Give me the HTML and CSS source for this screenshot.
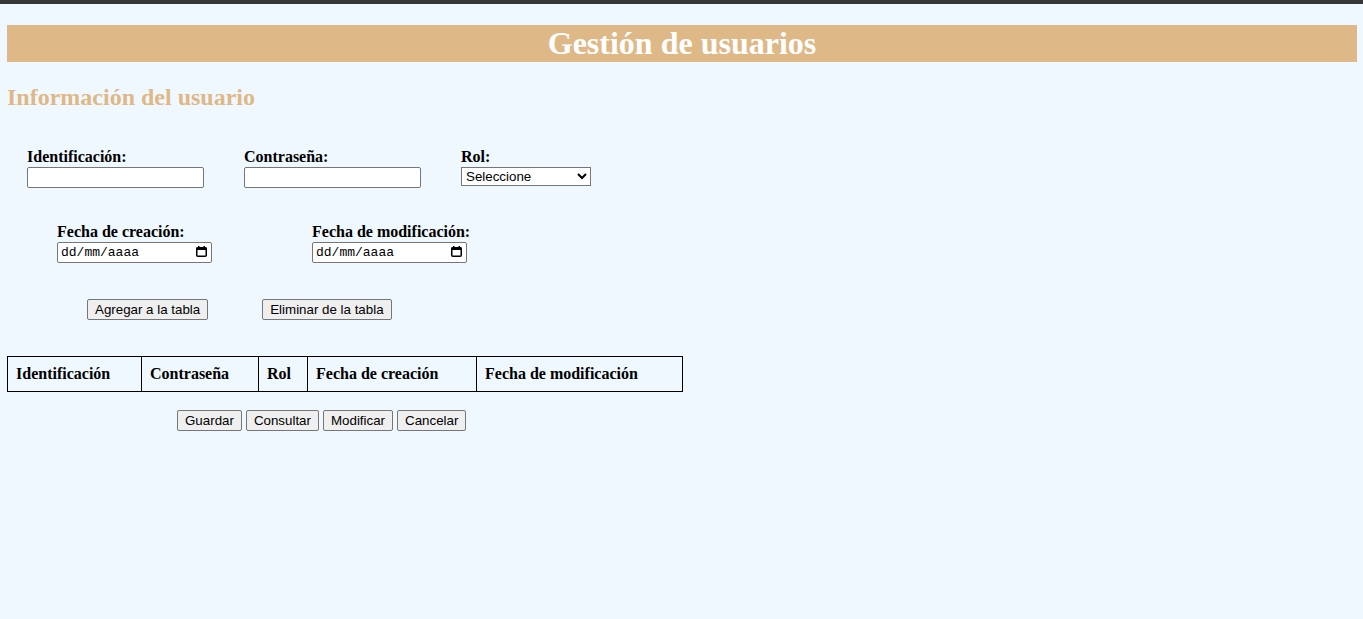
FILE: index.html
```html
<!DOCTYPE html>
<html lang="es">
<head>
<meta charset="utf-8">
<title>Gestión de usuarios</title>
<link rel="stylesheet" href="styles.css">
</head>
<body>
<div class="topbar"></div>
<main class="page">
  <h1 class="title">Gestión de usuarios</h1>
  <h2 class="subtitle">Información del usuario</h2>

  <div class="row row-one">
    <div class="field">
      <label class="label" for="ident">Identificación:</label>
      <input class="text-input" id="ident" type="text">
    </div>
    <div class="field">
      <label class="label" for="pass">Contraseña:</label>
      <input class="text-input" id="pass" type="password">
    </div>
    <div class="field">
      <label class="label" for="rol">Rol:</label>
      <select class="select" id="rol">
        <option>Seleccione</option>
        <option>Administrador</option>
        <option>Usuario</option>
      </select>
    </div>
  </div>

  <div class="row row-two">
    <div class="field">
      <label class="label" for="fc">Fecha de creación:</label>
      <span class="datebox">
        <input class="date-input" id="fc" type="text" placeholder="dd/mm/aaaa">
        <svg class="cal" width="11" height="11" viewBox="0 0 11 11" aria-hidden="true">
          <rect x="0.75" y="1.75" width="9.5" height="8.5" rx="1" fill="none" stroke="#000" stroke-width="1.5"/>
          <rect x="0.5" y="1.5" width="10" height="2.5" fill="#000"/>
          <rect x="2" y="0" width="1.5" height="2" fill="#000"/>
          <rect x="7.5" y="0" width="1.5" height="2" fill="#000"/>
        </svg>
      </span>
    </div>
    <div class="field">
      <label class="label" for="fm">Fecha de modificación:</label>
      <span class="datebox">
        <input class="date-input" id="fm" type="text" placeholder="dd/mm/aaaa">
        <svg class="cal" width="11" height="11" viewBox="0 0 11 11" aria-hidden="true">
          <rect x="0.75" y="1.75" width="9.5" height="8.5" rx="1" fill="none" stroke="#000" stroke-width="1.5"/>
          <rect x="0.5" y="1.5" width="10" height="2.5" fill="#000"/>
          <rect x="2" y="0" width="1.5" height="2" fill="#000"/>
          <rect x="7.5" y="0" width="1.5" height="2" fill="#000"/>
        </svg>
      </span>
    </div>
  </div>

  <div class="row row-actions">
    <button class="btn" type="button">Agregar a la tabla</button>
    <button class="btn" type="button">Eliminar de la tabla</button>
  </div>

  <table class="users">
    <colgroup>
      <col class="c1"><col class="c2"><col class="c3"><col class="c4"><col class="c5">
    </colgroup>
    <thead>
      <tr>
        <th>Identificación</th>
        <th>Contraseña</th>
        <th>Rol</th>
        <th>Fecha de creación</th>
        <th>Fecha de modificación</th>
      </tr>
    </thead>
  </table>

  <div class="row row-bottom">
    <button class="btn" type="button">Guardar</button>
    <button class="btn" type="button">Consultar</button>
    <button class="btn" type="button">Modificar</button>
    <button class="btn" type="button">Cancelar</button>
  </div>
</main>
</body>
</html>
```

FILE: styles.css
```css
html, body {
  margin: 0;
  padding: 0;
  background: #f0f8ff;
}

body {
  font-family: "Liberation Serif", "Times New Roman", serif;
  font-size: 16px;
  color: #000;
}

.topbar {
  height: 4px;
  background: #363636;
}

.page {
  padding: 0 6px 0 7px;
}

.title {
  margin: 21px 0 21px;
  background: #deb887;
  color: #fff;
  font-size: 32px;
  line-height: 37px;
  font-weight: bold;
  text-align: center;
}

.subtitle {
  margin: 0;
  color: #deb887;
  font-size: 24px;
  line-height: 28px;
  font-weight: bold;
}

.row {
  display: flex;
  align-items: flex-start;
}

.row-one {
  margin-top: 37px;
  padding-left: 20px;
  gap: 40px;
}

.row-two {
  margin-top: 35px;
  padding-left: 50px;
  gap: 100px;
}

.row-actions {
  margin-top: 36px;
  padding-left: 80px;
  gap: 54px;
}

.row-bottom {
  margin-top: 18px;
  padding-left: 170px;
  gap: 4px;
}

.field {
  display: flex;
  flex-direction: column;
  align-items: flex-start;
}

.label {
  font-weight: bold;
  font-size: 16px;
  line-height: 18px;
  margin-bottom: 1px;
}

.text-input {
  box-sizing: border-box;
  width: 177px;
  height: 21px;
  margin: 0;
  padding: 1px 2px;
  border: 1px solid #767676;
  border-radius: 2px;
  background: #fff;
  font-family: "Liberation Sans", Arial, sans-serif;
  font-size: 13.33px;
}

.select {
  box-sizing: border-box;
  width: 130px;
  height: 19px;
  margin: 0;
  border: 1px solid #767676;
  border-radius: 0;
  background: #fff;
  color: #000;
  font-family: "Liberation Sans", Arial, sans-serif;
  font-size: 13.33px;
}

.datebox {
  position: relative;
  display: block;
  width: 155px;
  height: 21px;
}

.date-input {
  box-sizing: border-box;
  width: 155px;
  height: 21px;
  margin: 0;
  padding: 1px 3px;
  border: 1px solid #767676;
  border-radius: 2px;
  background: #fff;
  font-family: "Liberation Mono", "Courier New", monospace;
  font-size: 13px;
  color: #000;
}

.date-input::placeholder {
  color: #000;
  opacity: 1;
}

.cal {
  position: absolute;
  right: 5px;
  top: 4px;
}

.btn {
  box-sizing: border-box;
  height: 21px;
  margin: 0;
  padding: 1px 7px;
  border: 1px solid #767676;
  border-radius: 2px;
  background: #efefef;
  color: #000;
  font-family: "Liberation Sans", Arial, sans-serif;
  font-size: 13.33px;
  line-height: 17px;
}

.users {
  margin-top: 36px;
  width: 675px;
  table-layout: fixed;
  border-collapse: collapse;
  border: 1px solid #000;
}

.users th {
  border: 1px solid #000;
  padding: 8px;
  height: 34px;
  box-sizing: border-box;
  text-align: left;
  font-weight: bold;
  font-size: 16px;
  line-height: 18px;
  white-space: nowrap;
}

.c1 { width: 134px; }
.c2 { width: 117px; }
.c3 { width: 49px; }
.c4 { width: 169px; }
.c5 { width: 206px; }
```
